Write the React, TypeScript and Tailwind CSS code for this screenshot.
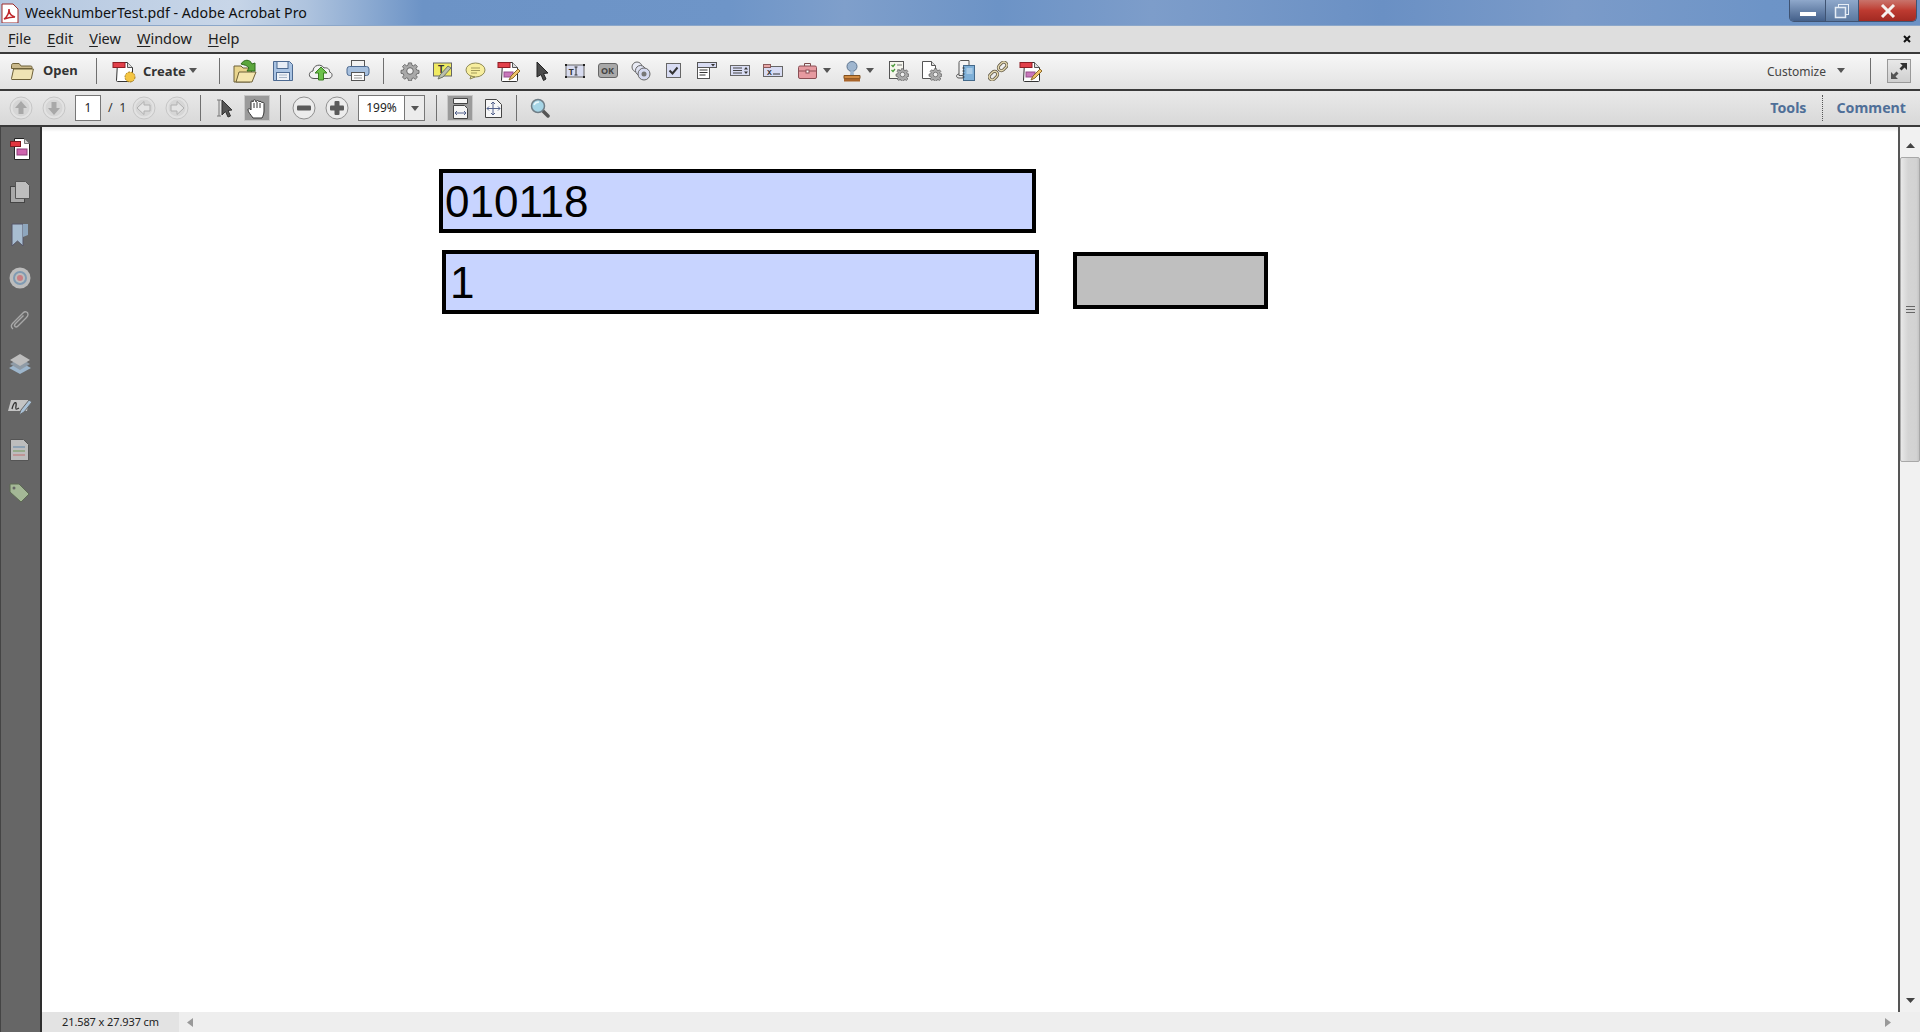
import type { ReactNode } from "react";

const ui = "font-['Noto_Sans','Open_Sans',sans-serif]";

const gearPath =
  "M8.300 1h3.400l.5 2.600 1.600.7 2.200-1.500 2.200 2.300-1.500 2.100.7 1.700 2.600.5v3.200l-2.600.5-.7 1.700 1.500 2.100-2.300 2.300-2.100-1.500-1.700.7-.4 2.500H8.300l-.5-2.600-1.600-.7-2.200 1.500-2.300-2.300 1.500-2.100-.7-1.600L0 12.600V9.300l2.500-.4.700-1.700-1.500-2.200L4 2.700l2.200 1.500 1.600-.7z";

function Sep({ className = "" }: { className?: string }) {
  return <div className={`h-[26px] w-px shrink-0 bg-[#6f6f6f] ${className}`} />;
}

function Caret({ className = "" }: { className?: string }) {
  return (
    <svg width="8" height="5" viewBox="0 0 8 5" className={`shrink-0 ${className}`}>
      <path d="M0 0h8L4 5z" fill="#555" />
    </svg>
  );
}

function Icon({ w = 24, h = 24, children }: { w?: number; h?: number; children: ReactNode }) {
  return (
    <svg width={w} height={h} viewBox={`0 0 ${w} ${h}`} className="shrink-0">
      {children}
    </svg>
  );
}

function Slot({ children }: { children: ReactNode }) {
  return <div className="flex h-full w-[33px] shrink-0 items-center justify-center">{children}</div>;
}

const FolderIcon = () => (
  <Icon w={24} h={20}>
    <path d="M1.500 4.500c0-1 .6-2 1.600-2h6l2 2.500h9.500c1 0 1.500.5 1.500 1.500v1H1.500z" fill="#c9b88a" stroke="#6d6038" />
    <path d="M2 18.500h18c.8 0 1.200-.4 1.400-1l2-9.500H3.600l-2.100 9.500c-.1.6 0 1 .5 1z" fill="#efe3b4" stroke="#6d6038" />
  </Icon>
);

const Gear = ({ s = 20, fill = "#a9a9a9" }: { s?: number; fill?: string }) => (
  <svg width={s} height={s} viewBox="0 0 20 20" className="shrink-0">
    <path d={gearPath} transform="translate(1 1) scale(.9)" fill={fill} stroke="#666" />
    <circle cx="10" cy="10" r="3.300" fill="#eee" stroke="#666" />
  </svg>
);

const RedDoc = ({ accent, sun }: { accent?: boolean; sun?: boolean }) => (
  <Icon w={24} h={24}>
    <path d="M5.500 3.500h10l5 5v13c0 .6-.4 1-1 1h-14c-.6 0-1-.4-1-1z" fill="#fff" stroke="#333" />
    <path d="M15.500 3.500v5h5" fill="#ddd" stroke="#555" />
    <rect x="1" y="3.500" width="12" height="5" fill="#e2404a" stroke="#8d1d24" />
    {accent && <rect x="7" y="13" width="9" height="5" fill="#c977bb" stroke="#94508a" />}
    {accent && <path d="M12 21l2-4 7-7 2 2-7 7z" fill="#f0c36a" stroke="#8b6a2b" />}
    {sun && <circle cx="18" cy="18" r="5" fill="#f4c542" stroke="#a9801d" strokeDasharray="2 1" />}
  </Icon>
);

function RoundBtn({ d, rotate = "", pale }: { d: string; rotate?: string; pale?: boolean }) {
  return (
    <svg width="24" height="24" viewBox="0 0 24 24" className={`shrink-0 ${rotate}`}>
      <circle cx="12" cy="12" r="11" fill="#e2e2e2" stroke="#c6c6c6" />
      <circle cx="12" cy="12" r="8.500" fill="#d6d6d6" />
      <path d={d} fill={pale ? "#e4e4e4" : "#a8a8a8"} stroke={pale ? "#b0b0b0" : "none"} />
    </svg>
  );
}

const arrowUp = "M12 5l6 7h-3.500v6h-5v-6H6z";
const arrowLeft = "M5 12l7-6.500V9h6v6h-6v3.500z";
const arrowRight = "M19 12l-7-6.500V9H6v6h6v3.500z";

function ZoomBtn({ plus }: { plus?: boolean }) {
  return (
    <svg width="24" height="24" viewBox="0 0 24 24" className="shrink-0">
      <circle cx="12" cy="12" r="11" fill="#ececec" stroke="#909090" />
      <rect x="5" y="9.500" width="14" height="5" rx="1" fill="#5b5b5b" />
      {plus && <rect x="9.500" y="5" width="5" height="14" rx="1" fill="#5b5b5b" />}
    </svg>
  );
}

function SideIcon({ children }: { children: ReactNode }) {
  return <div className="flex h-[43px] items-center justify-center">{children}</div>;
}

const MenuItem = ({ k, rest }: { k: string; rest: string }) => (
  <span>
    <span className="underline underline-offset-2">{k}</span>
    {rest}
  </span>
);

function Toolbar1() {
  return (
    <div className="flex h-[37px] shrink-0 items-center border-t-2 border-[#3a3a3a] bg-gradient-to-b from-[#f7f7f7] to-[#e2e2e2] pb-[2px]">
      <div className="ml-[10px]">
        <FolderIcon />
      </div>
      <span className="ml-[9px] mt-[1px] w-[33px] text-[13px] font-bold text-[#333]">Open</span>
      <Sep className="ml-[20px]" />
      <div className="ml-[15px]">
        <RedDoc sun />
      </div>
      <span className="ml-[7px] mt-[2px] w-[40px] text-[13px] font-bold text-[#333]">Create</span>
      <Caret className="ml-[6px]" />
      <Sep className="ml-[22px]" />
      <div className="ml-[12px]">
        <Icon w={26} h={26}>
          <path d="M2 8h7l2 2h9l-2 14H2z" fill="#e9d58d" stroke="#6d6038" />
          <path d="M4 24l3-10h17l-4 10z" fill="#f4e6ae" stroke="#6d6038" />
          <path d="M9 6c3-5 9-5 11 0l3-1v8h-8l2-3c-2-3-5-3-8-4z" fill="#5ba63c" stroke="#2f6b1c" />
        </Icon>
      </div>
      <div className="ml-[14px]">
        <Icon w={22} h={22}>
          <path d="M1.500 1.500h16l3 3v16h-19z" fill="#a9c3e2" stroke="#4d6a91" />
          <rect x="5" y="1.500" width="11" height="7" fill="#e8eef6" stroke="#4d6a91" />
          <rect x="4.500" y="12.500" width="13" height="8" fill="#eef2f7" stroke="#4d6a91" />
          <path d="M7 15h8M7 17.500h8" stroke="#a8b6c8" />
        </Icon>
      </div>
      <div className="ml-[14px]">
        <Icon w={26} h={22}>
          <path d="M6 18.500c-6 0-6-7-1-7.500 0-6 8-8 11-3 4-1 6 2 5.500 4 4 1 3 6.500-1 6.500z" fill="#f2f2f2" stroke="#555" />
          <path d="M13 7l6 6h-3.500v7h-5v-7H7z" fill="#6cc04a" stroke="#3a7f22" />
        </Icon>
      </div>
      <div className="ml-[12px]">
        <Icon w={24} h={23}>
          <rect x="5.500" y="1.500" width="13" height="7" fill="#f2f2f2" stroke="#555" />
          <rect x="1" y="7.500" width="22" height="9" rx="2.500" fill="#a7c0de" stroke="#4d6a91" />
          <rect x="5.500" y="13.500" width="13" height="8" fill="#fafafa" stroke="#555" />
          <path d="M8 16.500h8M8 19h8" stroke="#999" />
        </Icon>
      </div>
      <Sep className="ml-[13px]" />
      <div className="ml-[9px] flex h-full items-center">
        <Slot>
          <Gear />
        </Slot>
        <Slot>
          <Icon w={20} h={18}>
            <rect x=".5" y="1" width="18" height="13" fill="#f0ea62" stroke="#666" />
            <text x="5" y="11" fontSize="10" fontWeight="700" fontFamily="Liberation Sans" fill="#333">T</text>
            <path d="M5 17l2-4 8-9 3 2-8 9z" fill="#b9bfae" stroke="#6f7566" />
          </Icon>
        </Slot>
        <Slot>
          <Icon w={21} h={18}>
            <ellipse cx="10.500" cy="8" rx="9.500" ry="7" fill="#f7ee9e" stroke="#8f8a55" />
            <path d="M6 14l-1 3 5-2z" fill="#f7ee9e" stroke="#8f8a55" />
            <path d="M6 6h9M6 8.500h9M6 11h6" stroke="#a39b5a" />
          </Icon>
        </Slot>
        <Slot>
          <RedDoc accent />
        </Slot>
        <Slot>
          <Icon w={14} h={20}>
            <path d="M2 1l11 11-4.500.500L11 18l-2.500 1.500-2.500-6L2 16z" fill="#4a4a4a" stroke="#222" />
          </Icon>
        </Slot>
        <Slot>
          <Icon w={20} h={14}>
            <rect x="1" y="1" width="18" height="12" fill="#d8dcf0" stroke="#666" />
            <rect x="0" y="0" width="2" height="2" fill="#222" />
            <rect x="18" y="0" width="2" height="2" fill="#222" />
            <rect x="0" y="12" width="2" height="2" fill="#222" />
            <rect x="18" y="12" width="2" height="2" fill="#222" />
            <text x="3.500" y="10.500" fontSize="9" fontWeight="700" fontFamily="Liberation Mono" fill="#333">T</text>
            <path d="M11 3v8M9.500 3h3M9.500 11h3" stroke="#333" />
          </Icon>
        </Slot>
        <Slot>
          <div className="flex h-[15px] w-[20px] items-center justify-center rounded-[3px] border border-[#666] bg-[#a9a9a9] text-[9px] font-bold leading-none text-[#444]">
            OK
          </div>
        </Slot>
        <Slot>
          <Icon w={20} h={20}>
            <circle cx="6" cy="6" r="5" fill="#e9ebf5" stroke="#666" />
            <circle cx="9.500" cy="9.500" r="5" fill="#dfe2f2" stroke="#666" />
            <circle cx="13" cy="13" r="6" fill="#d5d9ef" stroke="#666" />
            <circle cx="13" cy="13" r="2.500" fill="#777" />
          </Icon>
        </Slot>
        <Slot>
          <Icon w={15} h={15}>
            <rect x=".5" y=".5" width="14" height="14" fill="#d8dcf3" stroke="#666" />
            <path d="M3.500 7.500l3 3 5-6" fill="none" stroke="#333" strokeWidth="2" />
          </Icon>
        </Slot>
        <Slot>
          <Icon w={20} h={17}>
            <rect x=".5" y="2.500" width="12" height="14" fill="#fff" stroke="#555" />
            <rect x=".5" y=".5" width="19" height="5" fill="#d8dcf3" stroke="#555" />
            <path d="M14 2h4l-2 2.500z" fill="#333" />
            <path d="M2.500 8h8M2.500 10.500h8M2.500 13h6" stroke="#333" />
          </Icon>
        </Slot>
        <Slot>
          <Icon w={20} h={11}>
            <rect x=".5" y=".5" width="19" height="10" fill="#d8dcf3" stroke="#666" />
            <path d="M3 3h9M3 5.500h9M3 8h9" stroke="#444" />
            <path d="M14 4.500l2-2.500 2 2.500zM14 6.500l2 2.500 2-2.500z" fill="#333" />
          </Icon>
        </Slot>
        <Slot>
          <Icon w={20} h={13}>
            <rect x=".5" y="2.500" width="19" height="10" fill="#d8dcf3" stroke="#666" />
            <rect x=".5" y=".5" width="7" height="3" fill="#e8a8a8" stroke="#8a5a5a" />
            <text x="4" y="11" fontSize="8" fontWeight="700" fontFamily="Liberation Mono" fill="#333">X</text>
            <path d="M10 10h7" stroke="#333" />
          </Icon>
        </Slot>
      </div>
      <div className="ml-[9px] flex items-center">
        <Icon w={19} h={17}>
          <path d="M6.500 4V1.500h6V4" fill="none" stroke="#7a4a4a" />
          <rect x=".5" y="4" width="18" height="12.500" rx="1.500" fill="#e69aa0" stroke="#8a4f55" />
          <path d="M1 9h17" stroke="#8a4f55" />
          <rect x="8" y="8" width="3" height="3" fill="#fff" stroke="#8a4f55" />
        </Icon>
        <Caret className="ml-[6px]" />
      </div>
      <div className="ml-[12px] flex items-center">
        <Icon w={18} h={22}>
          <circle cx="9" cy="6.500" r="5" fill="#9fb6cf" stroke="#5e7590" />
          <path d="M7.500 11h3l.5 4H7z" fill="#9fb6cf" />
          <path d="M1 15.500h16v3H1z" fill="#d08a42" stroke="#80501f" />
          <path d="M1 18.500h16v3H1z" fill="#a9642a" />
        </Icon>
        <Caret className="ml-[5px]" />
      </div>
      <div className="ml-[8px] flex h-full items-center">
        <Slot>
          <Icon w={20} h={20}>
            <rect x=".5" y=".5" width="14" height="17" fill="#f6f6ee" stroke="#555" />
            <path d="M2.500 4l1.500 1.500L6 3M2.500 9l1.500 1.500L6 8" fill="none" stroke="#4a9a3a" strokeWidth="1.300" />
            <path d="M8 4h5M8 9h3" stroke="#777" />
            <g transform="translate(7 7) scale(.65)">
              <path d={gearPath} fill="#aaa" stroke="#555" />
              <circle cx="10" cy="10" r="3.500" fill="#eee" stroke="#555" />
            </g>
          </Icon>
        </Slot>
        <Slot>
          <Icon w={20} h={20}>
            <path d="M.5.500h9l4 4v13H.5z" fill="#fff" stroke="#555" />
            <path d="M9.500.500v4h4" fill="#ddd" stroke="#555" />
            <g transform="translate(7 7) scale(.65)">
              <path d={gearPath} fill="#aaa" stroke="#555" />
              <circle cx="10" cy="10" r="3.500" fill="#eee" stroke="#555" />
            </g>
          </Icon>
        </Slot>
        <Slot>
          <Icon w={20} h={21}>
            <path d="M4 2.500c0-1 1-2 2-2h8v15H4z" fill="#f4f4f4" stroke="#555" />
            <path d="M4 14c-3 0-3.500 4 0 4h4" fill="none" stroke="#555" />
            <rect x="8.500" y="5.500" width="11" height="15" fill="#7fb0d8" stroke="#44698a" />
            <rect x="11.500" y="8" width="6" height="6" fill="#a9cbe6" />
            <path d="M7.500 8h2M7.500 11h2M7.500 14h2M7.500 17h2" stroke="#333" />
          </Icon>
        </Slot>
        <Slot>
          <Icon w={20} h={20}>
            <g fill="none">
              <rect x="-7" y="-3" width="9.500" height="6" rx="3" transform="translate(7 13) rotate(-45)" stroke="#5a5240" strokeWidth="3" />
              <rect x="-2.500" y="-3" width="9.500" height="6" rx="3" transform="translate(13 7) rotate(-45)" stroke="#5a5240" strokeWidth="3" />
              <rect x="-7" y="-3" width="9.500" height="6" rx="3" transform="translate(7 13) rotate(-45)" stroke="#e4d8b0" strokeWidth="1.300" />
              <rect x="-2.500" y="-3" width="9.500" height="6" rx="3" transform="translate(13 7) rotate(-45)" stroke="#e4d8b0" strokeWidth="1.300" />
            </g>
          </Icon>
        </Slot>
        <Slot>
          <RedDoc accent />
        </Slot>
      </div>
      <div className="flex-1" />
      <span className="mt-[2px] text-[12px] text-[#444]">Customize</span>
      <Caret className="ml-[11px]" />
      <Sep className="ml-[25px]" />
      <div className="mx-[9px] ml-[16px] flex h-[24px] w-[24px] items-center justify-center border border-[#999] bg-gradient-to-b from-[#e8e8e8] to-[#cfcfcf]">
        <Icon w={20} h={20}>
          <path d="M11 2h7v7l-2.500-2.500-3 3-2-2 3-3z" fill="#333" />
          <path d="M9 18H2v-7l2.500 2.500 3-3 2 2-3 3z" fill="#555" />
        </Icon>
      </div>
    </div>
  );
}

function Toolbar2() {
  return (
    <div className="flex h-[38px] shrink-0 items-center border-y-2 border-[#3a3a3a] bg-gradient-to-b from-[#e9e9e9] to-[#d8d8d8]">
      <div className="ml-[9px]">
        <RoundBtn d={arrowUp} />
      </div>
      <div className="ml-[9px]">
        <RoundBtn d={arrowUp} rotate="rotate-180" />
      </div>
      <div className="ml-[9px] flex h-[26px] w-[26px] items-center justify-center border border-[#777] bg-white text-[12px] text-[#222]">
        1
      </div>
      <span className="ml-[7px] w-[17px] whitespace-pre text-[12.500px] text-[#333]">{"/  1"}</span>
      <div className="ml-[7px]">
        <RoundBtn d={arrowLeft} pale />
      </div>
      <div className="ml-[9px]">
        <RoundBtn d={arrowRight} pale />
      </div>
      <Sep className="ml-[11px]" />
      <div className="ml-[14px]">
        <Icon w={18} h={20}>
          <path d="M2 2h4M2 18h4M4 2v16" stroke="#777" fill="none" />
          <path d="M7 2l10 10-4 .500 2.500 5.500-2.500 1-2.500-5.500L7 17z" fill="#555" stroke="#333" />
        </Icon>
      </div>
      <div className="ml-[11px] flex h-[26px] w-[26px] items-center justify-center border border-[#c8c8c8] bg-[#9a9a9a]">
        <Icon w={20} h={21}>
          <path d="M6 20c-2-3-5-6-5-8s2-1.500 3 0V4c0-1.500 2-1.500 2 0 0-3 3-3 3 0 0-2 3-2 3 0 0-1 3-1 3 1 0-1 2-1 2 .5V13c0 3-1 5-2 7z" fill="#fff" stroke="#333" strokeLinejoin="round" />
          <path d="M7 5v5M10 4v6M13 5v5" stroke="#333" />
        </Icon>
      </div>
      <Sep className="ml-[10px]" />
      <div className="ml-[11px]">
        <ZoomBtn />
      </div>
      <div className="ml-[9px]">
        <ZoomBtn plus />
      </div>
      <div className="ml-[9px] flex h-[26px] w-[67px] border border-[#777] bg-white">
        <div className="flex w-[45px] items-center justify-center text-[12px] text-[#222]">199%</div>
        <div className="flex flex-1 items-center justify-center border-l border-[#777] bg-[#ececec]">
          <Caret />
        </div>
      </div>
      <Sep className="ml-[11px]" />
      <div className="ml-[10px] flex h-[26px] w-[26px] items-center justify-center border border-[#c8c8c8] bg-[#9a9a9a]">
        <Icon w={17} h={21}>
          <path d="M1.500.500h14v5h-14zM1.500 7.500h11l3 3v10h-14z" fill="#f5f5f5" stroke="#444" />
          <path d="M3 15h11M3 15l2-2M3 15l2 2M14 15l-2-2M14 15l-2 2" stroke="#52618c" fill="none" />
        </Icon>
      </div>
      <div className="ml-[12px]">
        <Icon w={17} h={19}>
          <path d="M.5.500h11l5 5v13H.5z" fill="#f7f7f7" stroke="#444" />
          <path d="M8 3v13M2 9.500h13M8 3l-2 2M8 3l2 2M8 16l-2-2M8 16l2-2M2 9.500l2-2M2 9.500l2 2M15 9.500l-2-2M15 9.500l-2 2" stroke="#52618c" fill="none" />
        </Icon>
      </div>
      <Sep className="ml-[14px]" />
      <div className="ml-[13px]">
        <Icon w={20} h={20}>
          <path d="M12 12l6 6" stroke="#555" strokeWidth="3.500" strokeLinecap="round" />
          <circle cx="8" cy="8" r="6.500" fill="#a6d5e6" stroke="#6f7d86" strokeWidth="1.500" />
          <path d="M4 7c1-2.500 3-3 5-3" stroke="#e7f6fb" strokeWidth="1.500" fill="none" />
        </Icon>
      </div>
      <div className="flex-1" />
      <span className="text-[14.200px] font-bold text-[#4f6f98]">Tools</span>
      <div className="ml-[15px] h-[26px] border-l border-dotted border-[#555]" />
      <span className="ml-[14px] mr-[14px] text-[14.200px] font-bold text-[#4f6f98]">Comment</span>
    </div>
  );
}

function Sidebar() {
  return (
    <div className="flex w-[42px] shrink-0 flex-col border-l border-r-2 border-l-[#444] border-r-[#2e2e2e] bg-[#666] pr-[2px]">
      <SideIcon>
        <Icon w={20} h={22}>
          <path d="M4.500.500h10l5 5v16h-15z" fill="#fff" stroke="#222" />
          <path d="M14.500.500v5h5" fill="#ccc" stroke="#777" />
          <rect x=".5" y="3.500" width="10" height="5" fill="#e2353f" stroke="#7d1a20" />
          <rect x="7" y="11" width="10" height="6" fill="#cf63ae" stroke="#8c3f78" />
        </Icon>
      </SideIcon>
      <SideIcon>
        <Icon w={20} h={22}>
          <rect x=".5" y="5.500" width="14" height="16" fill="#a8a8a8" stroke="#444" />
          <path d="M5.500.500h10l4 4v13h-14z" fill="#bdbdbd" stroke="#555" />
        </Icon>
      </SideIcon>
      <SideIcon>
        <Icon w={18} h={24}>
          <path d="M1 1h11v22l-5.500-5L1 23z" fill="#a8bdd1" stroke="#556" />
          <path d="M12 1h5v11l-5 2z" fill="#8ea6bd" />
        </Icon>
      </SideIcon>
      <SideIcon>
        <Icon w={22} h={22}>
          <circle cx="11" cy="11" r="10.500" fill="#bcbcbc" />
          <circle cx="11" cy="11" r="7" fill="#7f9ab2" />
          <circle cx="11" cy="11" r="5" fill="#bcbcbc" />
          <circle cx="11" cy="11" r="3" fill="#c97f84" />
        </Icon>
      </SideIcon>
      <SideIcon>
        <Icon w={22} h={22}>
          <path d="M4 19c-2.500-2-2-4 0-6L14 3c2-2 5-1.500 5 1.500 0 1-.5 2-1.500 3L9 16c-1 1-2.500 1-3 .5s-.5-2 .5-3l8-8" fill="none" stroke="#a8a8a8" strokeWidth="1.400" />
        </Icon>
      </SideIcon>
      <SideIcon>
        <Icon w={22} h={20}>
          <path d="M11 8l11 6-11 6L0 14z" fill="#9db6cc" />
          <path d="M11 4l10 6-10 6L1 10z" fill="#8f9ba6" />
          <path d="M11 0l10 6-10 6L1 6z" fill="#bdbdbd" />
        </Icon>
      </SideIcon>
      <SideIcon>
        <Icon w={24} h={20}>
          <path d="M3 3h18l-2 11H0z" fill="#c4c4c4" />
          <path d="M4 12c2-8 5-8 4-3s1 3 3 2" stroke="#333" strokeWidth="1.300" fill="none" />
          <path d="M11 18l2-5 8-10 3 2-8 10z" fill="#a8c0d6" stroke="#666" />
        </Icon>
      </SideIcon>
      <SideIcon>
        <Icon w={20} h={22}>
          <path d="M.5.500h13l5 5v16H.5z" fill="#bdbdbd" stroke="#555" />
          <path d="M3 8h12" stroke="#7f9ab2" strokeWidth="1.500" />
          <path d="M3 12h12" stroke="#8aa67a" strokeWidth="1.500" />
          <path d="M3 16h12" stroke="#c08a8a" strokeWidth="1.500" />
        </Icon>
      </SideIcon>
      <SideIcon>
        <Icon w={21} h={20}>
          <path d="M1 1h9l10 10-8 8L1 9z" fill="#a4b896" stroke="#5c6a52" />
          <circle cx="5" cy="5" r="1.500" fill="#666" />
        </Icon>
      </SideIcon>
    </div>
  );
}

function PdfPage() {
  return (
    <div className="min-w-0 flex-1 overflow-hidden bg-white pl-[397px] pt-[42px] font-['Liberation_Sans',sans-serif] shadow-[inset_0_5px_3px_-2px_#ececec]">
      <div className="flex h-[64px] w-[597px] items-center border-4 border-black bg-[#c8d4ff] pl-[2px] pt-[1px] text-[44px] leading-none text-black">
        010118
      </div>
      <div className="ml-[3px] mt-[17px] flex items-start">
        <div className="flex h-[64px] w-[597px] items-center border-4 border-black bg-[#c8d4ff] pl-[4px] pt-[1px] text-[44px] leading-none text-black">
          1
        </div>
        <div className="ml-[34px] mt-[2px] h-[57px] w-[195px] border-4 border-black bg-[#bfbfbf]" />
      </div>
    </div>
  );
}

function VScrollbar() {
  return (
    <div className="flex w-[22px] shrink-0 flex-col border-l-2 border-[#555] bg-[#f1f1f1]">
      <div className="flex h-[30px] items-center justify-center pt-[6px]">
        <svg width="9" height="5" viewBox="0 0 9 5">
          <path d="M4.500 0L9 5H0z" fill="#444" />
        </svg>
      </div>
      <div className="flex h-[305px] flex-col items-center justify-center gap-[2px] rounded-[2px] border border-[#a8a8a8] bg-[linear-gradient(90deg,#e8e8e8,#d4d4d4_40%,#d2d2d2_85%,#c4c4c4)]">
        <div className="h-px w-[9px] bg-[#666]" />
        <div className="h-px w-[9px] bg-[#666]" />
        <div className="h-px w-[9px] bg-[#666]" />
      </div>
      <div className="flex-1" />
      <div className="flex h-[24px] items-center justify-center">
        <svg width="9" height="5" viewBox="0 0 9 5">
          <path d="M0 0h9L4.500 5z" fill="#444" />
        </svg>
      </div>
    </div>
  );
}

function StatusBar() {
  return (
    <div className="flex h-[20px] shrink-0 items-center bg-[#eeeeee]">
      <div className="flex h-full w-[137px] items-center bg-[#e3e3e3] pl-[20px]">
        <span className="whitespace-nowrap text-[11px] tracking-[-0.1px] text-[#222]">21.587 x 27.937 cm</span>
      </div>
      <svg width="6" height="9" viewBox="0 0 6 9" className="ml-[8px]">
        <path d="M0 4.500L6 0v9z" fill="#999" />
      </svg>
      <div className="flex-1" />
      <svg width="6" height="9" viewBox="0 0 6 9" className="mr-[29px]">
        <path d="M6 4.500L0 0v9z" fill="#999" />
      </svg>
    </div>
  );
}

export default function App() {
  return (
    <div className={`flex h-[1032px] w-[1920px] flex-col overflow-hidden bg-[#dedede] ${ui}`}>
      <div className="flex h-[26px] shrink-0 items-start bg-[linear-gradient(90deg,#b4c7e0_0%,#c8d6e8_12%,#aec3de_16%,#6c93c6_22%,#6e95c8_38%,#7f9fcb_44%,#6c93c6_52%,#7d9dca_60%,#6a90c4_72%,#7b9bc9_82%,#6d94c7_92%,#6c92c5_100%)] shadow-[inset_0_-1px_0_#8ca7c9]">
        <div className="ml-[1px] mt-[3px]">
          <Icon w={18} h={20}>
            <path d="M1 1h11l5 5v14H1z" fill="#fff" stroke="#9d2a2a" />
            <path d="M3 16c3-2 5-6 5-10 0 4 2 7 6 8-4 0-8 1-11 2z" fill="none" stroke="#c0272d" strokeWidth="1.500" />
          </Icon>
        </div>
        <span className="ml-[6px] mt-[2px] text-[14.200px] leading-[22px] text-[#111]">WeekNumberTest.pdf - Adobe Acrobat Pro</span>
        <div className="flex-1" />
        <div className="mr-[3px] flex h-[22px] w-[128px] overflow-hidden rounded-b-[5px] border border-t-0 border-[#3f5372]">
          <div className="flex w-[36px] items-end justify-center border-r border-[#3f5372] bg-gradient-to-b from-[#8fa8cb] to-[#44608a] pb-[5px]">
            <div className="h-[4px] w-[16px] bg-white" />
          </div>
          <div className="flex w-[33px] items-center justify-center border-r border-[#3f5372] bg-gradient-to-b from-[#8fa8cb] to-[#5a789f]">
            <Icon w={16} h={16}>
              <rect x="4.500" y="1.500" width="10" height="10" fill="none" stroke="#e6edf5" />
              <rect x="1.500" y="4.500" width="10" height="10" fill="#7d97ba" stroke="#e6edf5" strokeWidth="1.500" />
            </Icon>
          </div>
          <div className="flex flex-1 items-center justify-center bg-gradient-to-b from-[#c9736b] via-[#bd3a30] to-[#a22a22]">
            <Icon w={16} h={14}>
              <path d="M2 1l12 12M14 1L2 13" stroke="#f6f1ee" strokeWidth="3" />
            </Icon>
          </div>
        </div>
      </div>

      <div className="flex h-[26px] shrink-0 items-center justify-between bg-[#dedede] pl-[8px] pr-[9px]">
        <div className="flex gap-[16px] text-[14.500px] text-[#222]">
          <MenuItem k="F" rest="ile" />
          <MenuItem k="E" rest="dit" />
          <MenuItem k="V" rest="iew" />
          <MenuItem k="W" rest="indow" />
          <MenuItem k="H" rest="elp" />
        </div>
        <Icon w={8} h={8}>
          <path d="M1 1l6 6M7 1L1 7" stroke="#111" strokeWidth="2" />
        </Icon>
      </div>

      <Toolbar1 />
      <Toolbar2 />

      <div className="flex min-h-0 flex-1">
        <Sidebar />
        <div className="flex min-w-0 flex-1 flex-col">
          <div className="flex min-h-0 flex-1">
            <PdfPage />
            <VScrollbar />
          </div>
          <StatusBar />
        </div>
      </div>
    </div>
  );
}
